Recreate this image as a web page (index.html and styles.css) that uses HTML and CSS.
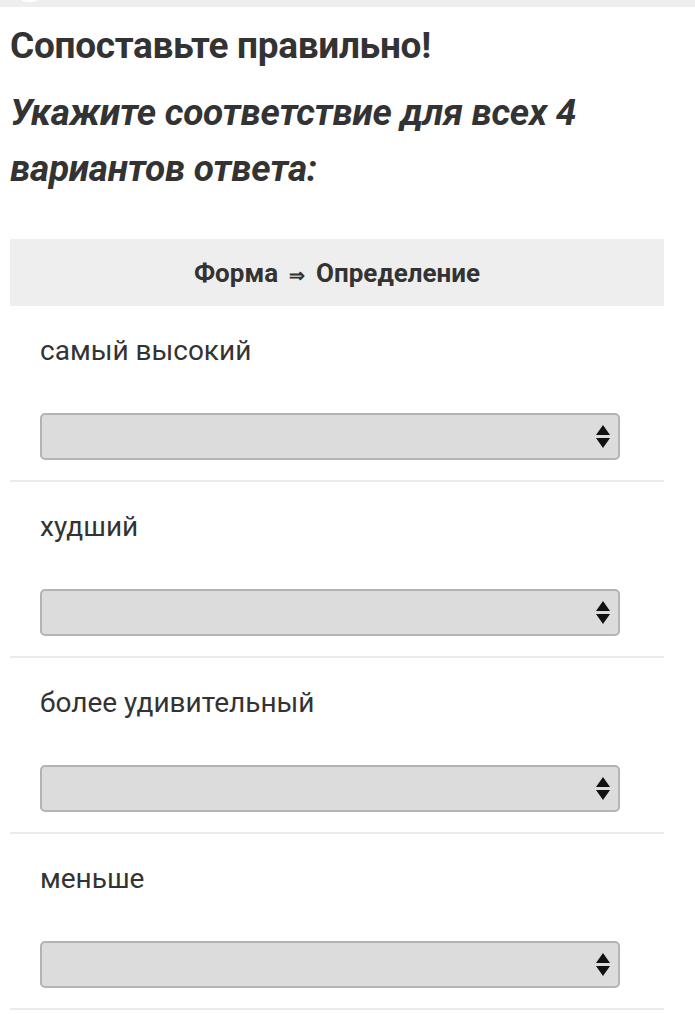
FILE: index.html
```html
<!DOCTYPE html>
<html lang="ru">
<head>
<meta charset="utf-8">
<link rel="stylesheet" href="styles.css">
</head>
<body>
<div class="topbar"><span class="avatar"></span></div>
<main class="content">
  <h2 class="title">Сопоставьте правильно!</h2>
  <p class="subtitle">Укажите соответствие для всех 4 вариантов ответа:</p>
  <div class="table">
    <div class="thead">Форма <span class="arrow">⇒</span> Определение</div>
    <div class="row">
      <div class="label">самый высокий</div>
      <div class="select"><span class="updown"><svg width="14" height="23" viewBox="0 0 14 23"><path d="M7 0 L14 10 L0 10 Z M0 13 L14 13 L7 23 Z" fill="#111"/></svg></span></div>
    </div>
    <div class="row">
      <div class="label">худший</div>
      <div class="select"><span class="updown"><svg width="14" height="23" viewBox="0 0 14 23"><path d="M7 0 L14 10 L0 10 Z M0 13 L14 13 L7 23 Z" fill="#111"/></svg></span></div>
    </div>
    <div class="row">
      <div class="label">более удивительный</div>
      <div class="select"><span class="updown"><svg width="14" height="23" viewBox="0 0 14 23"><path d="M7 0 L14 10 L0 10 Z M0 13 L14 13 L7 23 Z" fill="#111"/></svg></span></div>
    </div>
    <div class="row">
      <div class="label">меньше</div>
      <div class="select"><span class="updown"><svg width="14" height="23" viewBox="0 0 14 23"><path d="M7 0 L14 10 L0 10 Z M0 13 L14 13 L7 23 Z" fill="#111"/></svg></span></div>
    </div>
  </div>
</main>
</body>
</html>
```

FILE: styles.css
```css
html, body {
  margin: 0;
  padding: 0;
  background: #fff;
}
body {
  font-family: Roboto, "Liberation Sans", sans-serif;
  color: #333;
  overflow: hidden;
}
.topbar {
  height: 7px;
  background: #eeeeee;
  position: relative;
  overflow: hidden;
}
.avatar {
  position: absolute;
  left: 10px;
  top: -38px;
  width: 40px;
  height: 40px;
  border-radius: 50%;
  background: #fff;
}
.content {
  padding: 0 31px 0 10px;
}
.title {
  margin: 17px 0 0;
  font-size: 37px;
  font-weight: 700;
  line-height: 44px;
  letter-spacing: -0.3px;
  color: #333;
}
.subtitle {
  margin: 17px 0 0;
  font-size: 37px;
  font-weight: 700;
  font-style: italic;
  line-height: 56px;
  letter-spacing: -0.3px;
  color: #333;
}
.table {
  margin-top: 42px;
}
.thead {
  background: #eeeeee;
  height: 67px;
  display: flex;
  align-items: center;
  justify-content: center;
  font-size: 26px;
  font-weight: 700;
  color: #333;
}
.arrow {
  font-size: 19px;
  margin: 5px 11px 0;
}
.row {
  padding: 28px 44px 20px 30px;
  border-bottom: 2px solid #ebebeb;
}
.label {
  font-size: 28px;
  line-height: 34px;
  color: #333;
}
.select {
  margin-top: 45px;
  height: 43px;
  background: #dcdcdc;
  border: 2px solid #b4b4b4;
  border-radius: 5px;
  display: flex;
  align-items: center;
  justify-content: flex-end;
  padding-right: 8px;
}
.updown {
  display: flex;
}
```
